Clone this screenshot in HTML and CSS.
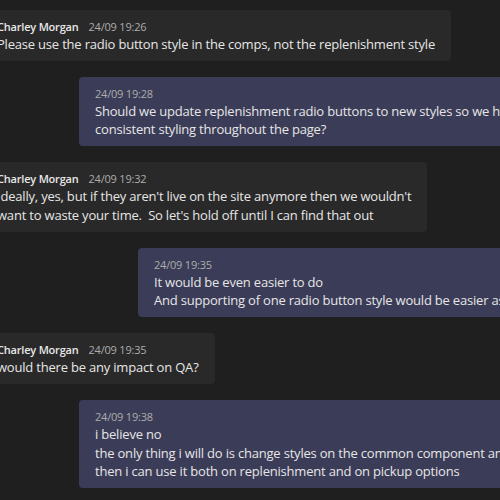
FILE: index.html
```html
<!DOCTYPE html>
<html>
<head>
<meta charset="utf-8">
<link rel="stylesheet" href="styles.css">
</head>
<body>
<div class="chat">
  <div class="msg recv">
    <div class="meta"><span class="name">Charley Morgan</span><span class="time">24/09 19:26</span></div>
    <div class="text">Please use the radio button style in the comps, not the replenishment style</div>
  </div>
  <div class="msg sent wide">
    <div class="meta"><span class="time">24/09 19:28</span></div>
    <div class="text">Should we update replenishment radio buttons to new styles so we have<br>consistent styling throughout the page?</div>
  </div>
  <div class="msg recv">
    <div class="meta"><span class="name">Charley Morgan</span><span class="time">24/09 19:32</span></div>
    <div class="text">Ideally, yes, but if they aren't live on the site anymore then we wouldn't<br>want to waste your time.&nbsp; So let's hold off until I can find that out</div>
  </div>
  <div class="msg sent narrow">
    <div class="meta"><span class="time">24/09 19:35</span></div>
    <div class="text">It would be even easier to do<br>And supporting of one radio button style would be easier as well</div>
  </div>
  <div class="msg recv">
    <div class="meta"><span class="name">Charley Morgan</span><span class="time">24/09 19:35</span></div>
    <div class="text">would there be any impact on QA?</div>
  </div>
  <div class="msg sent wide">
    <div class="meta"><span class="time">24/09 19:38</span></div>
    <div class="text">i believe no<br>the only thing i will do is change styles on the common component and<br>then i can use it both on replenishment and on pickup options</div>
  </div>
</div>
</body>
</html>
```

FILE: styles.css
```css
html, body {
  margin: 0;
  padding: 0;
  background: #1f1f1f;
  overflow: hidden;
  width: 500px;
  height: 500px;
}
.chat {
  display: flex;
  flex-direction: column;
  align-items: flex-start;
  gap: 16px;
  padding-top: 10px;
  margin-left: -19px;
  width: 700px;
  font-family: "Open Sans", "Noto Sans", sans-serif;
  font-size: 13px;
  letter-spacing: -0.2px;
  color: #e6e6e6;
}
.msg {
  border-radius: 4px;
  padding: 9px 16px 7.6px;
  line-height: 18.4px;
  white-space: nowrap;
}
.recv {
  background: #292929;
}
.sent {
  background: #3b3c57;
}
.wide { margin-left: 98px; }
.narrow { margin-left: 157px; }
.meta {
  display: flex;
  gap: 10px;
  font-size: 11px;
  line-height: 16px;
}
.name {
  font-weight: 600;
  color: #e8e8e8;
}
.time {
  color: #adadad;
}
```
